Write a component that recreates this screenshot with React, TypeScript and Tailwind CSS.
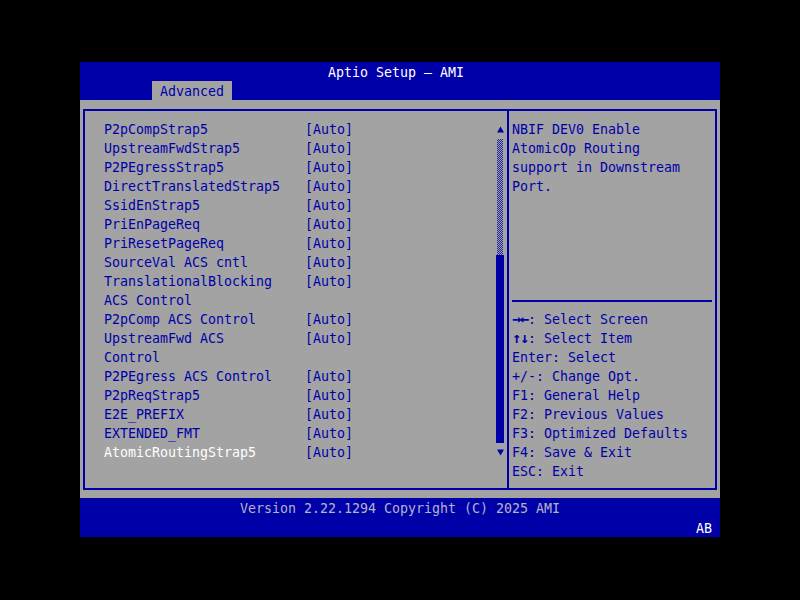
import React from "react";

const BLUE = "#0000a8";

type Row = { label: string; value?: string; selected?: boolean };

const rows: Row[] = [
  { label: "P2pCompStrap5", value: "[Auto]" },
  { label: "UpstreamFwdStrap5", value: "[Auto]" },
  { label: "P2PEgressStrap5", value: "[Auto]" },
  { label: "DirectTranslatedStrap5", value: "[Auto]" },
  { label: "SsidEnStrap5", value: "[Auto]" },
  { label: "PriEnPageReq", value: "[Auto]" },
  { label: "PriResetPageReq", value: "[Auto]" },
  { label: "SourceVal ACS cntl", value: "[Auto]" },
  { label: "TranslationalBlocking", value: "[Auto]" },
  { label: "ACS Control" },
  { label: "P2pComp ACS Control", value: "[Auto]" },
  { label: "UpstreamFwd ACS", value: "[Auto]" },
  { label: "Control" },
  { label: "P2PEgress ACS Control", value: "[Auto]" },
  { label: "P2pReqStrap5", value: "[Auto]" },
  { label: "E2E_PREFIX", value: "[Auto]" },
  { label: "EXTENDED_FMT", value: "[Auto]" },
  { label: "AtomicRoutingStrap5", value: "[Auto]", selected: true },
];

const help = [
  "NBIF DEV0 Enable",
  "AtomicOp Routing",
  "support in Downstream",
  "Port.",
];

const keys: { k: string; t: string; arrows?: string[] }[] = [
  { k: "", t: ": Select Screen", arrows: ["→", "←"] },
  { k: "", t: ": Select Item", arrows: ["↑", "↓"] },
  { k: "Enter", t: ": Select" },
  { k: "+/-", t: ": Change Opt." },
  { k: "F1", t: ": General Help" },
  { k: "F2", t: ": Previous Values" },
  { k: "F3", t: ": Optimized Defaults" },
  { k: "F4", t: ": Save & Exit" },
  { k: "ESC", t: ": Exit" },
];

export default function App() {
  return (
    <div
      className="w-[800px] h-[600px] bg-black pt-[62px] pl-[80px] text-[13.3px] leading-[19px] whitespace-pre"
      style={{ fontFamily: '"DejaVu Sans Mono", "Liberation Mono", monospace' }}
    >
      <div className="w-[640px] h-[475px] flex flex-col">
        {/* header */}
        <div className="h-[38px] bg-[#0000a8] flex flex-col">
          <div className="h-[19px] pt-[1px] text-center text-white pr-[8px]">Aptio Setup – AMI</div>
          <div className="h-[19px] flex pl-[72px]">
            <div className="bg-[#a3a3a3] text-[#0000a8] px-[8px] pt-[1px]">Advanced</div>
          </div>
        </div>

        {/* body */}
        <div className="flex-1 bg-[#a3a3a3] pt-[9px] pb-[8px] pl-[3px] pr-[3px]">
          <div className="h-full border-2 border-[#0000a8] flex">
            {/* left panel */}
            <div className="w-[424px] flex pt-[9px] border-r-2 border-[#0000a8]">
              <div className="flex-1 pl-[19px] text-[#0000a8]">
                {rows.map((r, i) => (
                  <div key={i} className="h-[19px] flex">
                    <div className={`w-[201px] ${r.selected ? "text-white" : ""}`}>{r.label}</div>
                    <div>{r.value ?? ""}</div>
                  </div>
                ))}
              </div>
              {/* scrollbar */}
              <div className="w-[8px] mr-[3px] flex flex-col">
                <div className="h-[19px] flex items-center justify-center">
                  <svg width="7" height="7" viewBox="0 0 7 7">
                    <polygon points="3.5,0.5 7,6.5 0,6.5" fill={BLUE} />
                  </svg>
                </div>
                <div className="h-[116px] mx-[1px] bg-[repeating-conic-gradient(#0000a8_0%_25%,#a3a3a3_0%_50%)] bg-[length:2px_2px] opacity-80" />
                <div className="h-[188px] bg-[#0000a8]" />
                <div className="h-[19px] flex items-center justify-center">
                  <svg width="7" height="7" viewBox="0 0 7 7">
                    <polygon points="0,0.5 7,0.5 3.5,6.5" fill={BLUE} />
                  </svg>
                </div>
              </div>
            </div>

            {/* right panel */}
            <div className="flex-1 pt-[9px] pl-[3px] pr-[3px] text-[#0000a8] flex flex-col">
              <div className="h-[171px]">
                {help.map((h, i) => (
                  <div key={i} className="h-[19px]">{h}</div>
                ))}
              </div>
              <div className="h-[19px] flex items-center">
                <div className="w-full h-[2px] bg-[#0000a8]" />
              </div>
              <div>
                {keys.map((k, i) => (
                  <div key={i} className="h-[19px] flex">
                    {k.arrows ? (
                      k.arrows.map((a, j) => (
                        <span
                          key={j}
                          className="inline-block w-[8px] overflow-visible text-center font-bold text-[15px] leading-[19px]"
                        >
                          {a}
                        </span>
                      ))
                    ) : (
                      <span>{k.k}</span>
                    )}
                    <span>{k.t}</span>
                  </div>
                ))}
              </div>
            </div>
          </div>
        </div>

        {/* footer */}
        <div className="h-[39px] bg-[#0000a8] flex flex-col">
          <div className="h-[20px] pt-[1px] text-center text-[#b4b4c8]">Version 2.22.1294 Copyright (C) 2025 AMI</div>
          <div className="h-[19px] pt-[1px] text-right text-white pr-[8px]">AB</div>
        </div>
      </div>
    </div>
  );
}
